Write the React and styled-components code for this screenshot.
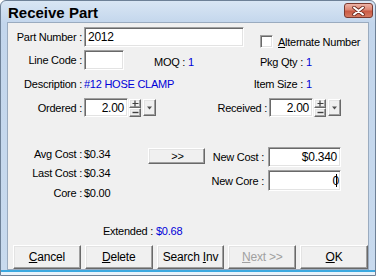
import React from 'react';
import styled, { createGlobalStyle } from 'styled-components';

const GlobalStyle = createGlobalStyle`
    html, body {
        margin: 0;
        padding: 0;
        background: #ffffff;
    }
    body {
        font-family: "Liberation Sans", Arial, sans-serif;
        font-size: 11px;
        letter-spacing: -0.25px;
        color: #000;
    }
`;

const Window = styled.div`
    width: 376px;
    height: 276px;
    box-sizing: border-box;
    border: 1px solid #6e8197;
    border-radius: 6px 6px 0 0;
    background: linear-gradient(180deg, #d9e6f4 0px, #c3d6ec 22px, #c8daee 100%);
    box-shadow: inset 0 -3px 0 #e8f2fa, inset 0 -5px 0 #3aa8e0;
    display: flex;
    flex-direction: column;
`;

const TitleBar = styled.div`
    height: 21px;
    display: flex;
    align-items: center;
    justify-content: space-between;
    padding: 0 2px 0 7px;
`;

const Title = styled.div`
    font-size: 15px;
    font-weight: bold;
    letter-spacing: 0;
    margin-top: 1px;
`;

const CloseButton = styled.div`
    width: 27px;
    height: 13px;
    border: 1px solid #7a3a30;
    border-radius: 3px;
    background: linear-gradient(180deg, #eeb3a6 0%, #dc8572 45%, #c95a44 55%, #d67a62 100%);
    display: flex;
    align-items: center;
    justify-content: center;
    margin-top: -2px;
`;

const Client = styled.div`
    flex: 1;
    margin: 0 6px 5px 6px;
    border: 1px solid #9aabbf;
    background: #f0f0f0;
    display: flex;
    flex-direction: column;
    padding: 4px 0 0 0;
`;

const Row = styled.div`
    display: flex;
    align-items: center;
    height: ${p => p.h || 20}px;
    margin-top: ${p => p.mt || 0}px;
`;

const Group = styled.div`
    display: flex;
    align-items: center;
    width: ${p => (p.w ? p.w + 'px' : 'auto')};
    flex-shrink: 0;
`;

const Label = styled.div`
    width: ${p => p.w}px;
    text-align: right;
    padding-right: ${p => (p.pr === undefined ? 2 : p.pr)}px;
    box-sizing: border-box;
    white-space: nowrap;
    flex-shrink: 0;
`;

const Text = styled.span`
    color: ${p => (p.blue ? '#0000d8' : '#000')};
    margin-left: ${p => p.ml || 0}px;
    white-space: nowrap;
`;

const TextBox = styled.div`
    width: ${p => p.w}px;
    height: ${p => p.h || 20}px;
    box-sizing: border-box;
    background: #fff;
    border: 1px solid;
    border-color: #a0a0a0 #ffffff #ffffff #a0a0a0;
    box-shadow: inset 1px 1px 0 #696969, inset -1px -1px 0 #e3e3e3;
    display: flex;
    align-items: center;
    justify-content: ${p => (p.right ? 'flex-end' : 'flex-start')};
    padding: 0 3px;
    font-size: 12px;
    flex-shrink: 0;
    margin-left: ${p => p.ml || 0}px;
`;

const Caret = styled.span`
    display: inline-block;
    width: 1px;
    height: 13px;
    background: #000;
    margin-left: -3px;
`;

const Raised = styled.div`
    box-sizing: border-box;
    background: #f0f0f0;
    border: 1px solid;
    border-color: #ffffff #696969 #696969 #ffffff;
    box-shadow: inset -1px -1px 0 #a0a0a0, inset 1px 1px 0 #e3e3e3;
    display: flex;
    align-items: center;
    justify-content: center;
`;

const SpinCol = styled.div`
    display: flex;
    flex-direction: column;
    margin-left: 1px;
`;

const SpinBtn = styled(Raised)`
    width: 12px;
    height: 9px;
`;

const DropBtn = styled(Raised)`
    width: 13px;
    height: 17px;
    margin-left: 2px;
`;

const Spinner = ({ value }) => (
    <Group>
        <TextBox w={44} h={19} right>{value}</TextBox>
        <SpinCol>
            <SpinBtn>
                <svg width="7" height="7" viewBox="0 0 7 7">
                    <path d="M3 0.5v6M0.5 3.5h6" stroke="#404040" strokeWidth="1.2" />
                </svg>
            </SpinBtn>
            <SpinBtn>
                <svg width="7" height="5" viewBox="0 0 7 5">
                    <path d="M0.5 2.5h6" stroke="#404040" strokeWidth="1.4" />
                </svg>
            </SpinBtn>
        </SpinCol>
        <DropBtn>
            <svg width="7" height="4" viewBox="0 0 7 4">
                <path d="M1 0.5h5L3.5 3.5z" fill="#505050" />
            </svg>
        </DropBtn>
    </Group>
);

const CheckBox = styled.div`
    width: 13px;
    height: 13px;
    box-sizing: border-box;
    background: #fff;
    border: 1px solid;
    border-color: #a0a0a0 #ffffff #ffffff #a0a0a0;
    box-shadow: inset 1px 1px 0 #696969, inset -1px -1px 0 #e3e3e3;
    margin-top: 9px;
`;

const CheckLabel = styled.span`
    margin: 9px 0 0 5px;
    white-space: nowrap;
`;

const CostRow = styled.div`
    display: flex;
    align-items: flex-start;
    margin-top: 26px;
`;

const CostList = styled.div`
    width: 140px;
    display: flex;
    flex-direction: column;
    flex-shrink: 0;
`;

const CostLine = styled.div`
    display: flex;
    align-items: center;
    height: 19.5px;
`;

const TransferBtn = styled(Raised)`
    width: 57px;
    height: 16px;
    margin-top: 4px;
    font-size: 11px;
    padding-left: 2px;
`;

const NewCol = styled.div`
    display: flex;
    flex-direction: column;
    gap: 3px;
    margin: 3px 0 0 3px;
`;

const ButtonBar = styled.div`
    display: flex;
    gap: 4px;
    padding-left: 5px;
    margin-top: 6px;
`;

const DlgButton = styled(Raised)`
    width: 68px;
    height: 24px;
    font-size: 12px;
    letter-spacing: -0.2px;
    color: ${p => (p.disabled ? '#a0a0a0' : '#000')};
`;

const U = styled.u`
    text-underline-offset: 1px;
`;

export default function App() {
    return (
        <>
            <GlobalStyle />
            <Window>
                <TitleBar>
                    <Title>Receive Part</Title>
                    <CloseButton>
                        <svg width="13" height="10" viewBox="0 0 13 10">
                            <path d="M2 1.5L11 8.5M11 1.5L2 8.5" stroke="#6a2a20" strokeWidth="3.6" strokeLinecap="round" />
                            <path d="M2 1.5L11 8.5M11 1.5L2 8.5" stroke="#ffffff" strokeWidth="2" strokeLinecap="round" />
                        </svg>
                    </CloseButton>
                </TitleBar>
                <Client>
                    <Row h={20}>
                        <Label w={76}>Part Number :</Label>
                        <TextBox w={160}>2012</TextBox>
                        <Group style={{ marginLeft: 16 }}>
                            <CheckBox />
                            <CheckLabel><U>A</U>lternate Number</CheckLabel>
                        </Group>
                    </Row>
                    <Row h={20} mt={3}>
                        <Group w={200}>
                            <Label w={76}>Line Code :</Label>
                            <TextBox w={40} />
                            <Text ml={30} style={{ marginTop: 4 }}>MOQ : <Text blue>1</Text></Text>
                        </Group>
                        <Group style={{ marginTop: 4 }}>
                            <Label w={97}>Pkg Qty :</Label>
                            <Text blue ml={1}>1</Text>
                        </Group>
                    </Row>
                    <Row h={16} mt={6}>
                        <Group w={200}>
                            <Label w={76}>Description :</Label>
                            <Text blue>#12 HOSE CLAMP</Text>
                        </Group>
                        <Group>
                            <Label w={97}>Item Size :</Label>
                            <Text blue ml={1}>1</Text>
                        </Group>
                    </Row>
                    <Row h={19} mt={6}>
                        <Group w={200}>
                            <Label w={76}>Ordered :</Label>
                            <Spinner value="2.00" />
                        </Group>
                        <Group>
                            <Label w={61}>Received :</Label>
                            <Spinner value="2.00" />
                        </Group>
                    </Row>
                    <CostRow style={{ marginTop: 27 }}>
                        <CostList>
                            <CostLine><Label w={76}>Avg Cost :</Label><Text>$0.34</Text></CostLine>
                            <CostLine><Label w={76}>Last Cost :</Label><Text>$0.34</Text></CostLine>
                            <CostLine><Label w={76}>Core :</Label><Text>$0.00</Text></CostLine>
                        </CostList>
                        <TransferBtn>&gt;&gt;</TransferBtn>
                        <NewCol>
                            <Group>
                                <Label w={58}>New Cost :</Label>
                                <TextBox w={73} right ml={2}>$0.340</TextBox>
                            </Group>
                            <Group>
                                <Label w={58}>New Core :</Label>
                                <TextBox w={73} h={21} right ml={2}>0<Caret /></TextBox>
                            </Group>
                        </NewCol>
                    </CostRow>
                    <Row h={16} mt={20}>
                        <Label w={148} pr={3}>Extended :</Label>
                        <Text blue>$0.68</Text>
                    </Row>
                    <ButtonBar>
                        <DlgButton><span><U>C</U>ancel</span></DlgButton>
                        <DlgButton><span><U>D</U>elete</span></DlgButton>
                        <DlgButton><span>Search <U>I</U>nv</span></DlgButton>
                        <DlgButton disabled><span><U>N</U>ext &gt;&gt;</span></DlgButton>
                        <DlgButton><span><U>O</U>K</span></DlgButton>
                    </ButtonBar>
                </Client>
            </Window>
        </>
    );
}
